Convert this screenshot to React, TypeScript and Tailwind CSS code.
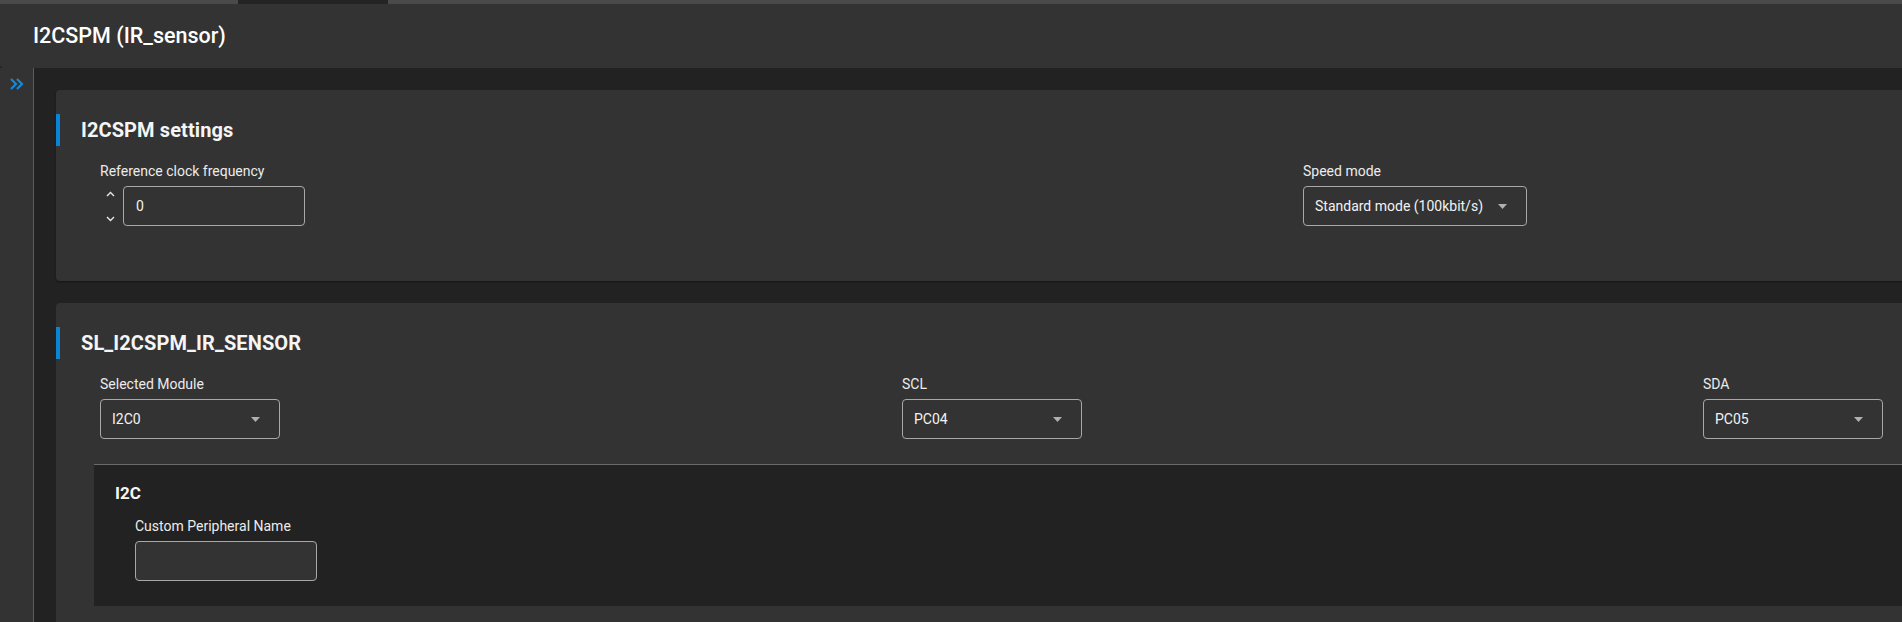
import React from "react";

const Caret = () => (
  <svg width="9" height="5" viewBox="0 0 9 5" className="shrink-0">
    <path d="M0 0 L9 0 L4.5 5 Z" fill="#b0b0b0" />
  </svg>
);

const Select = ({ value, width = "w-[180px]" }: { value: string; width?: string }) => (
  <div
    className={`${width} h-[40px] border border-[#a8a8a8] rounded-[4px] flex items-center justify-between pl-[11px] pr-[19px] text-[14px] text-[#f2f2f2]`}
  >
    <span className="whitespace-nowrap">{value}</span>
    <Caret />
  </div>
);

const Label = ({ children }: { children: React.ReactNode }) => (
  <div className="text-[14px] leading-[16px] text-[#ececec] mb-[7px] whitespace-nowrap">{children}</div>
);

const SectionHeading = ({ children }: { children: React.ReactNode }) => (
  <div className="flex items-center h-[32px]">
    <div className="w-[4px] h-[32px] bg-[#0a84d6]" />
    <div className="ml-[21px] text-[20px] leading-[24px] font-bold text-[#f5f5f5] tracking-[0.1px]">{children}</div>
  </div>
);

export default function App() {
  return (
    <div
      className="w-[1902px] h-[622px] overflow-hidden bg-[#222222] flex flex-col"
      style={{ fontFamily: "Roboto, 'Liberation Sans', sans-serif" }}
    >
      <div className="h-[4px] bg-[#4a4a4a] flex shrink-0">
        <div className="ml-[238px] w-[150px] h-[4px] bg-[#242424]" />
      </div>
      <div className="h-[64px] shrink-0 bg-[#333333] rounded-bl-[4px] flex items-center pl-[33px] text-[21.5px] font-medium text-white">
        I2CSPM (IR_sensor)
      </div>
      <div className="flex flex-1 min-h-0">
        <div className="w-[34px] shrink-0 bg-[#333333] border-r border-[#5c5c5c] pt-[10px] pl-[10px]">
          <svg width="14" height="12" viewBox="0 0 14 12">
            <path d="M1 1 L6 6 L1 11 M7 1 L12 6 L7 11" fill="none" stroke="#1589d9" strokeWidth="2.2" />
          </svg>
        </div>
        <div className="flex-1 min-w-0 pl-[22px] pt-[22px] flex flex-col gap-[22px]">
          <div className="w-[2500px] h-[191px] shrink-0 bg-[#333333] rounded-tl-[4px] rounded-bl-[4px] pt-[24px] shadow-[0_1px_2px_rgba(0,0,0,0.4)]">
            <SectionHeading>I2CSPM settings</SectionHeading>
            <div className="pl-[44px] mt-[17px] grid grid-cols-[1203px_1203px]">
              <div>
                <Label>Reference clock frequency</Label>
                <div className="flex items-center">
                  <div className="w-[23px] h-[40px] flex flex-col items-center justify-between pt-[5px] pb-[4px] pr-[2px]">
                    <svg width="9" height="6" viewBox="0 0 9 6">
                      <path d="M1 5 L4.5 1.5 L8 5" fill="none" stroke="#e8e8e8" strokeWidth="1.4" />
                    </svg>
                    <svg width="9" height="6" viewBox="0 0 9 6">
                      <path d="M1 1 L4.5 4.5 L8 1" fill="none" stroke="#e8e8e8" strokeWidth="1.4" />
                    </svg>
                  </div>
                  <div className="w-[182px] h-[40px] border border-[#a8a8a8] rounded-[4px] flex items-center pl-[12px] text-[14px] text-[#f2f2f2]">
                    0
                  </div>
                </div>
              </div>
              <div>
                <Label>Speed mode</Label>
                <Select value="Standard mode (100kbit/s)" width="w-[224px]" />
              </div>
            </div>
          </div>
          <div className="w-[2500px] shrink-0 bg-[#333333] rounded-tl-[4px] pt-[24px]">
            <SectionHeading>SL_I2CSPM_IR_SENSOR</SectionHeading>
            <div className="pl-[44px] mt-[17px] grid grid-cols-[802px_801px_800px]">
              <div>
                <Label>Selected Module</Label>
                <Select value="I2C0" />
              </div>
              <div>
                <Label>SCL</Label>
                <Select value="PC04" />
              </div>
              <div>
                <Label>SDA</Label>
                <Select value="PC05" />
              </div>
            </div>
            <div className="ml-[38px] mt-[25px] border-t border-[#6a6a6a] bg-[#222222] pt-[18px] pb-[25px] pl-[21px]">
              <div className="text-[17px] leading-[20px] font-bold text-[#f5f5f5]">I2C</div>
              <div className="pl-[20px] mt-[15px]">
                <Label>Custom Peripheral Name</Label>
                <div className="w-[182px] h-[40px] bg-[#333333] border border-[#a8a8a8] rounded-[4px]" />
              </div>
            </div>
            <div className="h-[40px]" />
          </div>
        </div>
      </div>
    </div>
  );
}
